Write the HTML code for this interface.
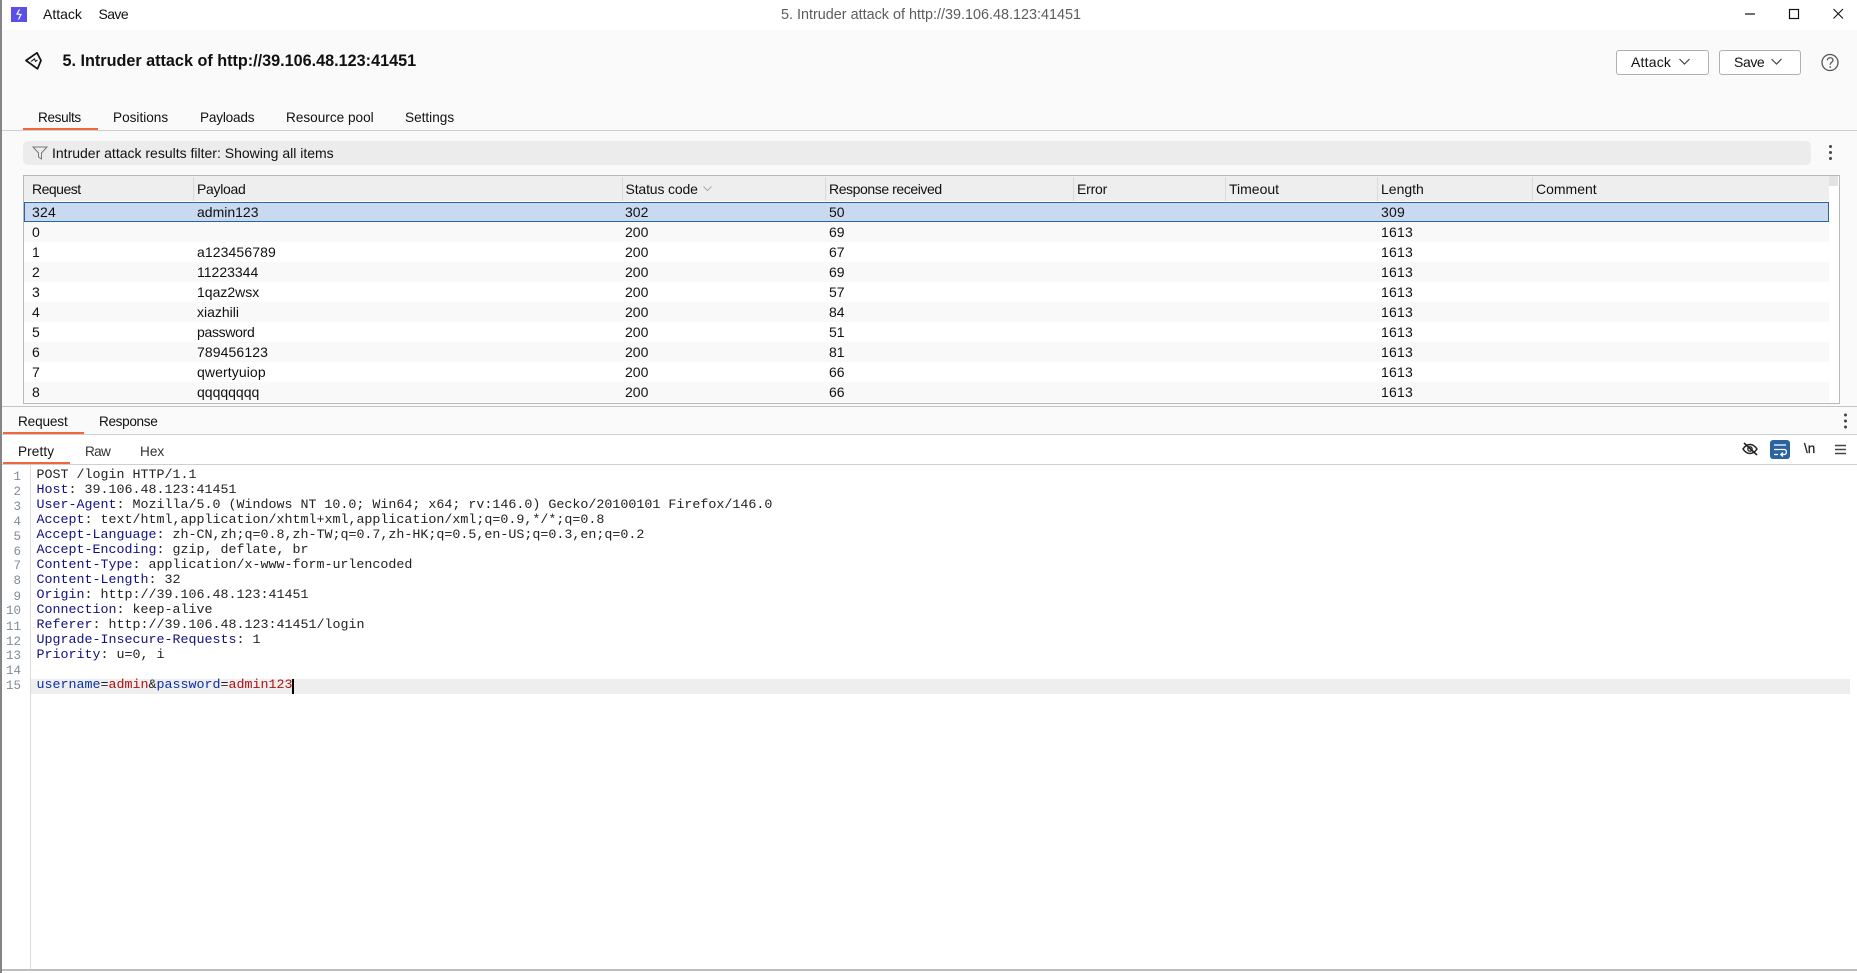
<!DOCTYPE html>
<html><head><meta charset="utf-8">
<style>
html,body{margin:0;padding:0;width:1857px;height:973px;overflow:hidden;background:#fff}
body{position:relative;font-family:"Liberation Sans",sans-serif;font-size:14px;color:#111}
.a{position:absolute}
.t{position:absolute;white-space:pre;line-height:20px;height:20px}
.r{position:absolute;left:24px;width:1805px;height:20px}
.c{position:absolute;top:0;line-height:20px;white-space:pre;color:#111}
.h{position:absolute;top:176px;height:25px;line-height:26px;white-space:pre;color:#111}
.s{position:absolute;top:177px;height:24px;width:1px;background:#dadada}
.l{position:absolute;left:36.5px;font-family:"Liberation Mono",monospace;font-size:13.33px;line-height:15px;height:15px;white-space:pre;color:#222}
.n{position:absolute;width:21px;text-align:right;font-family:"Liberation Mono",monospace;font-size:12.5px;line-height:15px;color:#7f8c99}
.k{color:#10107f}
.b{color:#0c2fa8}
.v{color:#b01010}
svg{position:absolute;overflow:visible}
</style></head><body>
<!-- backgrounds -->
<div class="a" style="left:0;top:30px;width:1857px;height:404px;background:#fafafa"></div>
<div class="a" style="left:0;top:0;width:2px;height:973px;background:#858585"></div>

<!-- title bar -->
<div class="a" style="left:11px;top:7px;width:16px;height:15px;background:#5b4fe9"></div>
<svg style="left:11px;top:7px" width="16" height="15"><path d="M8.500 2.500 L6 7 L10 7.500 L7.500 12.500" fill="none" stroke="#fff" stroke-width="1.2"/></svg>
<div class="t" style="left:43px;top:4px">Attack</div>
<div class="t" style="left:98.500px;top:4px;letter-spacing:-.6px">Save</div>
<div class="t" style="left:781px;top:5px;color:#5c5c5c;font-size:14.4px">5. Intruder attack of http://39.106.48.123:41451</div>
<svg style="left:0;top:0" width="1857" height="30"><path d="M1745 14H1755" stroke="#111" stroke-width="1.2"/><rect x="1789.5" y="9.5" width="9" height="9" fill="none" stroke="#111" stroke-width="1.2"/><path d="M1833.5 9L1843 18.5M1843 9L1833.5 18.5" stroke="#111" stroke-width="1.1"/></svg>

<!-- header -->
<svg style="left:0;top:0" width="60" height="80"><path d="M26 60.500 L37 52.800 L41 60.500 L37.500 68.800 Z" fill="none" stroke="#111" stroke-width="1.700" stroke-linejoin="round"/><path d="M31 61.500 L34.500 58.800 L35.500 61.500 L37.500 60" fill="none" stroke="#111" stroke-width="1"/></svg>
<div class="t" style="left:62.5px;top:51px;font-weight:bold;font-size:16.2px;color:#111">5. Intruder attack of http://39.106.48.123:41451</div>
<div class="a" style="left:1616px;top:50px;width:91px;height:23px;border:1px solid #b5aeae;border-radius:3px;background:#fff"></div>
<div class="a" style="left:1719px;top:50px;width:80px;height:23px;border:1px solid #b5aeae;border-radius:3px;background:#fff"></div>
<div class="t" style="left:1631px;top:52px;letter-spacing:.2px">Attack</div>
<div class="t" style="left:1734px;top:52px;letter-spacing:-.4px">Save</div>
<svg style="left:0;top:0" width="1857" height="80"><path d="M1679.5 59L1684.5 64L1689.5 59M1771.5 59L1776.5 64L1781.5 59" fill="none" stroke="#444" stroke-width="1.2"/><circle cx="1830" cy="62.5" r="8" fill="none" stroke="#555" stroke-width="1.3"/><path d="M1827.3 60.3C1827.5 56.8 1833 57 1833 60.3C1833 62.3 1830.2 62.3 1830.2 64.8" fill="none" stroke="#555" stroke-width="1.3"/><circle cx="1830.2" cy="67" r=".9" fill="#555"/></svg>

<!-- tabs -->
<div class="t" style="left:38px;top:108px;font-size:13.6px;letter-spacing:-.35px">Results</div>
<div class="t" style="left:113px;top:108px;font-size:13.6px">Positions</div>
<div class="t" style="left:200px;top:108px;font-size:13.6px;letter-spacing:-.2px">Payloads</div>
<div class="t" style="left:286px;top:108px;font-size:13.6px">Resource pool</div>
<div class="t" style="left:405px;top:108px;font-size:13.6px">Settings</div>
<div class="a" style="left:2px;top:130px;width:1855px;height:1px;background:#cfcfcf"></div>
<div class="a" style="left:23px;top:128px;width:75px;height:2px;background:#f0673a"></div>

<!-- filter -->
<div class="a" style="left:23px;top:141px;width:1788px;height:24px;background:#ececec;border-radius:5px"></div>
<svg style="left:32px;top:146px" width="16" height="14"><path d="M1 1H15L9.5 7V13L6.5 11V7Z" fill="none" stroke="#777" stroke-width="1"/></svg>
<div class="t" style="left:52px;top:143px;font-size:14px">Intruder attack results filter: Showing all items</div>
<svg style="left:0;top:0" width="1857" height="440"><g fill="#444"><circle cx="1830.5" cy="146.5" r="1.5"/><circle cx="1830.5" cy="152.5" r="1.5"/><circle cx="1830.5" cy="158.5" r="1.5"/><circle cx="1845.5" cy="415" r="1.5"/><circle cx="1845.5" cy="421" r="1.5"/><circle cx="1845.5" cy="427" r="1.5"/></g></svg>

<!-- table -->
<div class="a" style="left:23px;top:175px;width:1815px;height:227px;border:1px solid #b8b8b8;background:#fff"></div>
<div class="a" style="left:24px;top:176px;width:1805px;height:25px;background:#eeeeee"></div>
<div class="a" style="left:1829px;top:176px;width:9px;height:10px;background:#e3e3e3"></div>
<div class="s" style="left:193px"></div><div class="s" style="left:622px"></div><div class="s" style="left:825px"></div><div class="s" style="left:1073px"></div><div class="s" style="left:1225px"></div><div class="s" style="left:1377px"></div><div class="s" style="left:1532px"></div>
<div class="h" style="left:32px;letter-spacing:-.5px">Request</div>
<div class="h" style="left:197px;letter-spacing:-.3px">Payload</div>
<div class="h" style="left:625.500px;letter-spacing:-.15px">Status code</div>
<svg style="left:703px;top:186px" width="10" height="6"><path d="M.5 .5L4.5 4.5L8.5 .5" fill="none" stroke="#aaa" stroke-width="1"/></svg>
<div class="h" style="left:829px;letter-spacing:-.42px">Response received</div>
<div class="h" style="left:1077px;letter-spacing:-.2px">Error</div>
<div class="h" style="left:1229px">Timeout</div>
<div class="h" style="left:1381px">Length</div>
<div class="h" style="left:1536px">Comment</div>

<div class="r" style="top:202px;background:#c9daf0;box-sizing:border-box;height:20px;box-shadow:inset 0 0 0 1px #2a64a0"></div>
<div class="r" style="top:202px"><span class="c" style="left:8px;letter-spacing:.2px">324</span><span class="c" style="left:173px">admin123</span><span class="c" style="left:601px">302</span><span class="c" style="left:805px">50</span><span class="c" style="left:1357px;letter-spacing:.2px">309</span></div>
<div class="r" style="top:222px;background:#f9f9f9"><span class="c" style="left:8px">0</span><span class="c" style="left:601px">200</span><span class="c" style="left:805px">69</span><span class="c" style="left:1357px;letter-spacing:.2px">1613</span></div>
<div class="r" style="top:242px"><span class="c" style="left:8px">1</span><span class="c" style="left:173px;letter-spacing:.1px">a123456789</span><span class="c" style="left:601px">200</span><span class="c" style="left:805px">67</span><span class="c" style="left:1357px;letter-spacing:.2px">1613</span></div>
<div class="r" style="top:262px;background:#f9f9f9"><span class="c" style="left:8px">2</span><span class="c" style="left:173px">11223344</span><span class="c" style="left:601px">200</span><span class="c" style="left:805px">69</span><span class="c" style="left:1357px;letter-spacing:.2px">1613</span></div>
<div class="r" style="top:282px"><span class="c" style="left:8px">3</span><span class="c" style="left:173px">1qaz2wsx</span><span class="c" style="left:601px">200</span><span class="c" style="left:805px">57</span><span class="c" style="left:1357px;letter-spacing:.2px">1613</span></div>
<div class="r" style="top:302px;background:#f9f9f9"><span class="c" style="left:8px">4</span><span class="c" style="left:173px">xiazhili</span><span class="c" style="left:601px">200</span><span class="c" style="left:805px">84</span><span class="c" style="left:1357px;letter-spacing:.2px">1613</span></div>
<div class="r" style="top:322px"><span class="c" style="left:8px">5</span><span class="c" style="left:173px;letter-spacing:-.3px">password</span><span class="c" style="left:601px">200</span><span class="c" style="left:805px">51</span><span class="c" style="left:1357px;letter-spacing:.2px">1613</span></div>
<div class="r" style="top:342px;background:#f9f9f9"><span class="c" style="left:8px">6</span><span class="c" style="left:173px;letter-spacing:.1px">789456123</span><span class="c" style="left:601px">200</span><span class="c" style="left:805px">81</span><span class="c" style="left:1357px;letter-spacing:.2px">1613</span></div>
<div class="r" style="top:362px"><span class="c" style="left:8px">7</span><span class="c" style="left:173px;letter-spacing:.1px">qwertyuiop</span><span class="c" style="left:601px">200</span><span class="c" style="left:805px">66</span><span class="c" style="left:1357px;letter-spacing:.2px">1613</span></div>
<div class="r" style="top:382px;background:#f9f9f9;height:20px"><span class="c" style="left:8px">8</span><span class="c" style="left:173px">qqqqqqqq</span><span class="c" style="left:601px">200</span><span class="c" style="left:805px">66</span><span class="c" style="left:1357px;letter-spacing:.2px">1613</span></div>

<!-- request / response tabs -->
<div class="a" style="left:2px;top:406px;width:1855px;height:1px;background:#c9c2c2"></div>
<div class="t" style="left:18px;top:412px;font-size:13.6px;letter-spacing:-.15px">Request</div>
<div class="t" style="left:99px;top:412px;font-size:13.6px;letter-spacing:-.35px">Response</div>
<div class="a" style="left:2px;top:434px;width:1855px;height:1px;background:#cfcfcf"></div>
<div class="a" style="left:3px;top:432px;width:81px;height:2px;background:#f0673a"></div>
<div class="t" style="left:18px;top:442px;font-size:13.6px;letter-spacing:.1px">Pretty</div>
<div class="t" style="left:85px;top:442px;font-size:13.6px;color:#333;letter-spacing:-.7px">Raw</div>
<div class="t" style="left:140px;top:442px;font-size:13.6px;color:#333">Hex</div>
<div class="a" style="left:2px;top:464px;width:1855px;height:1px;background:#cfcfcf"></div>
<div class="a" style="left:3px;top:462px;width:67px;height:2px;background:#f0673a"></div>

<!-- editor icons -->
<svg style="left:0;top:0" width="1857" height="470">
<path d="M1743 449C1747 443 1753 443 1757 449C1753 455 1747 455 1743 449Z" fill="none" stroke="#222" stroke-width="1.5"/>
<circle cx="1750" cy="449" r="2.2" fill="none" stroke="#222" stroke-width="1.3"/>
<path d="M1744 443L1757 455" stroke="#222" stroke-width="1.6"/>
<rect x="1770" y="440" width="20" height="19" rx="3" fill="#2a64a0"/>
<path d="M1774 445H1786M1774 449.5H1784.5C1787 449.5 1787 454.500 1784.500 454.500H1781M1783 452.500L1780.800 454.500L1783 456.500M1774 454.500H1778" fill="none" stroke="#fff" stroke-width="1.3"/>
<path d="M1835 445.500H1846M1835 449.500H1846M1835 453.500H1846" stroke="#444" stroke-width="1.500"/>
</svg>
<div class="t" style="left:1804px;top:439px;font-size:13.500px;color:#222;-webkit-text-stroke:.3px #222">\n</div>

<!-- gutter -->
<div class="a" style="left:30px;top:465px;width:1px;height:504px;background:#dcdcdc"></div>
<div class="a" style="left:31px;top:679px;width:1819px;height:15px;background:#eeeeee"></div>

<div class="n" style="top:470px">1</div><div class="n" style="top:485px">2</div><div class="n" style="top:500px">3</div><div class="n" style="top:515px">4</div><div class="n" style="top:530px">5</div><div class="n" style="top:545px">6</div><div class="n" style="top:559px">7</div><div class="n" style="top:574px">8</div><div class="n" style="top:590px">9</div><div class="n" style="top:604px">10</div><div class="n" style="top:620px">11</div><div class="n" style="top:635px">12</div><div class="n" style="top:649px">13</div><div class="n" style="top:664px">14</div><div class="n" style="top:679px">15</div>

<div class="l" style="top:468px">POST /login HTTP/1.1</div>
<div class="l" style="top:483px"><span class="k">Host</span>: 39.106.48.123:41451</div>
<div class="l" style="top:498px"><span class="k">User-Agent</span>: Mozilla/5.0 (Windows NT 10.0; Win64; x64; rv:146.0) Gecko/20100101 Firefox/146.0</div>
<div class="l" style="top:513px"><span class="k">Accept</span>: text/html,application/xhtml+xml,application/xml;q=0.9,*/*;q=0.8</div>
<div class="l" style="top:528px"><span class="k">Accept-Language</span>: zh-CN,zh;q=0.8,zh-TW;q=0.7,zh-HK;q=0.5,en-US;q=0.3,en;q=0.2</div>
<div class="l" style="top:543px"><span class="k">Accept-Encoding</span>: gzip, deflate, br</div>
<div class="l" style="top:558px"><span class="k">Content-Type</span>: application/x-www-form-urlencoded</div>
<div class="l" style="top:573px"><span class="k">Content-Length</span>: 32</div>
<div class="l" style="top:588px"><span class="k">Origin</span>: http://39.106.48.123:41451</div>
<div class="l" style="top:603px"><span class="k">Connection</span>: keep-alive</div>
<div class="l" style="top:618px"><span class="k">Referer</span>: http://39.106.48.123:41451/login</div>
<div class="l" style="top:633px"><span class="k">Upgrade-Insecure-Requests</span>: 1</div>
<div class="l" style="top:648px"><span class="k">Priority</span>: u=0, i</div>
<div class="l" style="top:678px"><span class="b">username</span>=<span class="v">admin</span>&amp;<span class="b">password</span>=<span class="v">admin123</span></div>
<div class="a" style="left:292px;top:679px;width:2px;height:15px;background:#000"></div>

<div class="a" style="left:2px;top:969px;width:1855px;height:2px;background:#bdbdbd"></div>
</body></html>
